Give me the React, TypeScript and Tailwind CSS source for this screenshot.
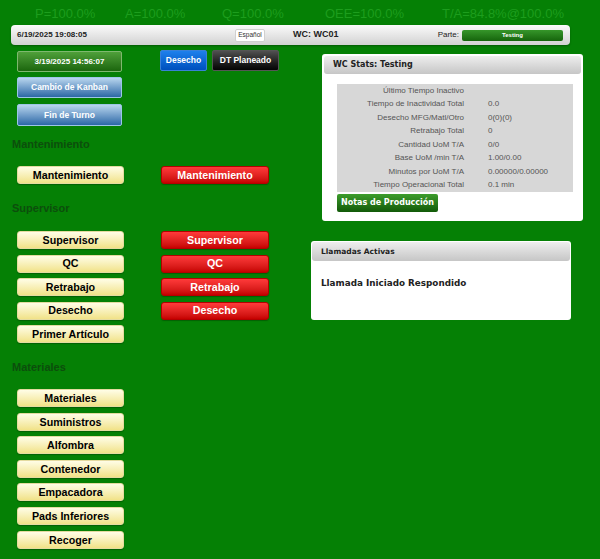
import React from 'react';

const stats = [
  { label: 'P=100.0%', w: 'w-[90px]' },
  { label: 'A=100.0%', w: 'w-[97px]' },
  { label: 'Q=100.0%', w: 'w-[103px]' },
  { label: 'OEE=100.0%', w: 'w-[117px]' },
  { label: 'T/A=84.8%@100.0%', w: '' },
];

const wcRows: [string, string][] = [
  ['Último Tiempo Inactivo', ''],
  ['Tiempo de Inactividad Total', '0.0'],
  ['Desecho MFG/Matl/Otro', '0(0)(0)'],
  ['Retrabajo Total', '0'],
  ['Cantidad UoM T/A', '0/0'],
  ['Base UoM /min T/A', '1.00/0.00'],
  ['Minutos por UoM T/A', '0.00000/0.00000'],
  ['Tiempo Operacional Total', '0.1 min'],
];

const supervisor = [
  { label: 'Supervisor', red: true },
  { label: 'QC', red: true },
  { label: 'Retrabajo', red: true },
  { label: 'Desecho', red: true },
  { label: 'Primer Artículo', red: false },
];

const materiales = ['Materiales', 'Suministros', 'Alfombra', 'Contenedor', 'Empacadora', 'Pads Inferiores', 'Recoger'];

function YellowBtn({ children }: { children: React.ReactNode }) {
  return (
    <div className="w-[107px] h-[18px] flex items-center justify-center rounded-[3px] border border-[#e4dba0] bg-linear-to-b from-[#fffde6] to-[#f1e287] text-black text-[10.7px] font-bold shadow-[0_1px_1px_rgba(0,0,0,0.25)]">
      {children}
    </div>
  );
}

function RedBtn({ children }: { children: React.ReactNode }) {
  return (
    <div className="w-[108px] h-[18px] ml-[37px] flex items-center justify-center rounded-[3px] border border-[#b40000] bg-linear-to-b from-[#ff3a3a] to-[#c60000] text-white text-[10.7px] font-bold shadow-[0_1px_1px_rgba(0,0,0,0.25)]">
      {children}
    </div>
  );
}

function Heading({ children, mt }: { children: React.ReactNode; mt: string }) {
  return (
    <div className={`ml-[-5px] ${mt} h-[12px] leading-[12px] text-[11px] font-bold text-[#0c4e0c]`}>
      {children}
    </div>
  );
}

export default function App() {
  return (
    <div className="w-[600px] h-[559px] bg-[#058005] overflow-hidden font-['Liberation_Sans',Arial,sans-serif]">
      {/* Stats */}
      <div className="h-[25px] pt-[3px] pl-[35px] flex items-center text-[13px] text-[#1d9d1d]">
        {stats.map((s) => (
          <span key={s.label} className={`${s.w} whitespace-nowrap`}>{s.label}</span>
        ))}
      </div>

      {/* Header bar */}
      <div className="ml-[11px] w-[559px] h-[20px] pl-[6px] pr-[7px] flex items-center rounded-[4px] bg-linear-to-b from-[#fbfbfb] to-[#d2d2d2] shadow-[0_1px_2px_rgba(0,0,0,0.3)]">
        <div className="w-[218px] text-[8px] font-bold text-[#222]">6/19/2025 19:08:05</div>
        <div className="w-[30px] h-[13px] flex items-center justify-center bg-white border border-[#d0d0d0] rounded-[2px] text-[6.5px] text-[#333]">
          Español
        </div>
        <div className="ml-[28px] text-[9px] font-bold text-[#222]">WC: WC01</div>
        <div className="flex-1" />
        <div className="text-[8px] text-[#222]">Parte:</div>
        <div className="ml-[3px] w-[101px] h-[11px] flex items-center justify-center rounded-[2px] bg-linear-to-b from-[#36962a] to-[#15650b] text-white text-[6px] font-bold">
          Testing
        </div>
      </div>

      <div className="flex">
        {/* Left column */}
        <div className="w-[311px] pl-[17px] pt-[6px]">
          <div className="flex items-start">
            <div className="w-[105px] h-[21px] flex items-center justify-center rounded-[2px] border border-[#7fb86f] bg-linear-to-b from-[#4fa03a] to-[#1b660c] text-white text-[8px] font-bold">
              3/19/2025 14:56:07
            </div>
            <div className="ml-[38px] mt-[-1px] w-[47px] h-[21px] flex items-center justify-center rounded-[2px] border border-[#3a80d8] bg-linear-to-b from-[#1e80ec] to-[#0050bd] text-white text-[8.5px] font-bold">
              Desecho
            </div>
            <div className="ml-[5px] mt-[-1px] w-[67px] h-[21px] flex items-center justify-center rounded-[2px] border border-[#555] bg-linear-to-b from-[#505050] to-[#050505] text-white text-[8.5px] font-bold">
              DT Planeado
            </div>
          </div>
          <div className="mt-[5px] w-[105px] h-[21px] flex items-center justify-center rounded-[2px] border border-[#9cc6e6] bg-linear-to-b from-[#b9d6ee] to-[#2b68a6] text-white text-[8.5px] font-bold">
            Cambio de Kanban
          </div>
          <div className="mt-[6px] w-[105px] h-[22px] flex items-center justify-center rounded-[2px] border border-[#9cc6e6] bg-linear-to-b from-[#b9d6ee] to-[#2b68a6] text-white text-[8.5px] font-bold">
            Fin de Turno
          </div>

          <Heading mt="mt-[12px]">Mantenimiento</Heading>
          <div className="mt-[16px] flex">
            <YellowBtn>Mantenimiento</YellowBtn>
            <RedBtn>Mantenimiento</RedBtn>
          </div>

          <Heading mt="mt-[18px]">Supervisor</Heading>
          <div className="mt-[17px] flex flex-col gap-[5.5px]">
            {supervisor.map((s) => (
              <div key={s.label} className="flex">
                <YellowBtn>{s.label}</YellowBtn>
                {s.red && <RedBtn>{s.label}</RedBtn>}
              </div>
            ))}
          </div>

          <Heading mt="mt-[18px]">Materiales</Heading>
          <div className="mt-[16px] flex flex-col gap-[5.6px]">
            {materiales.map((m) => (
              <YellowBtn key={m}>{m}</YellowBtn>
            ))}
          </div>
        </div>

        {/* Right column */}
        <div className="pt-[9px]">
          <div className="ml-[11px] w-[261px] p-[2px] pb-[9px] bg-white rounded-[3px]">
            <div className="h-[18px] pl-[9px] flex items-center rounded-[3px] bg-linear-to-b from-[#eeeeee] to-[#c6c6c6] font-['DejaVu_Sans',Verdana,sans-serif] text-[8px] font-bold text-[#222]">
              WC Stats: Testing
            </div>
            <div className="ml-[13px] mt-[10px] w-[236px] bg-[#d7d7d7] text-[8px] text-[#555]">
              {wcRows.map(([k, v]) => (
                <div key={k} className="h-[13.5px] flex items-center">
                  <div className="w-[127px] text-right whitespace-nowrap">{k}</div>
                  <div className="ml-[24px] whitespace-nowrap">{v}</div>
                </div>
              ))}
            </div>
            <div className="ml-[13px] mt-[2px] w-[101px] h-[18px] flex items-center justify-center rounded-[2px] bg-linear-to-b from-[#3d9d2c] to-[#125a08] font-['DejaVu_Sans',Verdana,sans-serif] text-white text-[8px] font-bold">
              Notas de Producción
            </div>
          </div>

          <div className="mt-[20px] w-[260px] h-[79px] p-[1px] bg-white rounded-[3px]">
            <div className="h-[19px] pl-[9px] flex items-center rounded-[3px] bg-linear-to-b from-[#eeeeee] to-[#c6c6c6] font-['DejaVu_Sans',Verdana,sans-serif] text-[7.5px] font-bold text-[#222]">
              Llamadas Activas
            </div>
            <div className="pl-[9px] pt-[16px] leading-[12px] font-['DejaVu_Sans',Verdana,sans-serif] text-[8.8px] font-bold text-[#222]">
              Llamada Iniciado Respondido
            </div>
          </div>
        </div>
      </div>
    </div>
  );
}
